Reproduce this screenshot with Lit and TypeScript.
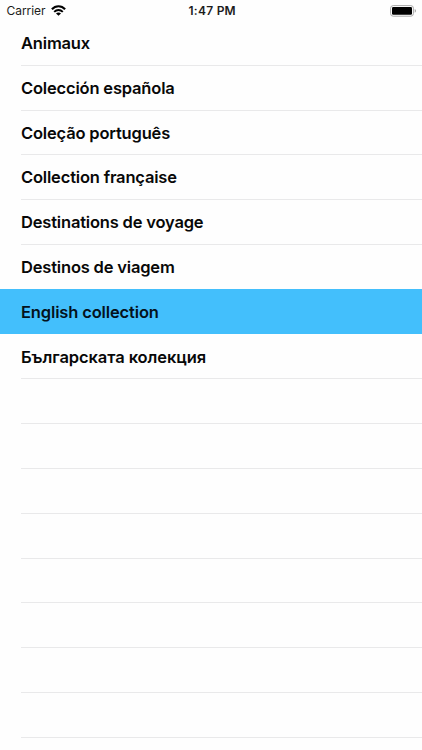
import { LitElement, html, css } from "lit";
import { customElement, state } from "lit/decorators.js";
import { classMap } from "lit/directives/class-map.js";

@customElement("status-bar")
class StatusBar extends LitElement {
  static styles = css`
    :host {
      display: grid;
      grid-template-columns: 1fr auto 1fr;
      align-items: center;
      flex: none;
      height: 21px;
      padding: 1px 5px 0 6.5px;
      box-sizing: border-box;
      font-size: 12px;
      line-height: 20px;
      color: #1c1c1c;
    }
    .carrier { display: flex; align-items: center; gap: 6px; letter-spacing: -0.05px; }
    .time { font-weight: 600; letter-spacing: 0.25px; padding-left: 1px; }
    .battery { display: flex; justify-content: flex-end; }
    svg { display: block; }
  `;
  render() {
    return html`
      <div class="carrier">
        <span>Carrier</span>
        <svg width="15" height="12" viewBox="0 0 15 12" fill="none">
          <path d="M0.9 4.3C4.5 0.2 10.5 0.2 14.1 4.3" stroke="#000" stroke-width="2.1" />
          <path d="M3.2 6.9C5.6 4.4 9.4 4.4 11.8 6.9" stroke="#000" stroke-width="1.9" />
          <path d="M5 8.4C6.4 7.1 8.6 7.1 10 8.4L7.5 10.8Z" fill="#000" />
        </svg>
      </div>
      <div class="time">1:47 PM</div>
      <div class="battery">
        <svg width="27" height="12" viewBox="0 0 27 12">
          <rect x=".6" y=".6" width="22.8" height="10.6" rx="2.6" fill="#fff" stroke="#a8a8a8" />
          <rect x="2" y="2" width="20" height="7.8" rx="1.2" fill="#000" />
          <path d="M24.7 4.1C26.5 4.6 26.5 7.2 24.7 7.7Z" fill="#a8a8a8" />
        </svg>
      </div>
    `;
  }
}

@customElement("app-root")
class AppRoot extends LitElement {
  static styles = css`
    :host {
      display: flex;
      flex-direction: column;
      height: 750px;
      overflow: hidden;
      background: #fefefe;
      font-family: Inter, "Noto Sans", sans-serif;
    }
    .list { display: flex; flex-direction: column; }
    .row {
      display: flex;
      flex: none;
      height: 44.8px;
      padding-left: 21px;
    }
    .cell {
      flex: 1;
      box-sizing: border-box;
      border-bottom: 1px solid #e9e9ea;
      font-size: 16.5px;
      font-weight: 600;
      letter-spacing: -0.18px;
      line-height: 44px;
      white-space: nowrap;
      color: #080808;
    }
    .cell:lang(bg) { letter-spacing: -0.08px; }
    .selected { background: #43bffc; margin: -0.4px 0 0.4px; }
    .selected .cell { border-color: transparent; color: #04121c; line-height: 46px; letter-spacing: -0.14px; }
    .flush .cell { border-color: transparent; }
  `;

  @state() private items = [
    { name: "Animaux", lang: "fr" },
    { name: "Colección española", lang: "es" },
    { name: "Coleção português", lang: "pt" },
    { name: "Collection française", lang: "fr" },
    { name: "Destinations de voyage", lang: "fr" },
    { name: "Destinos de viagem", lang: "pt" },
    { name: "English collection", lang: "en" },
    { name: "Българската колекция", lang: "bg" },
  ];
  @state() private selected = 6;

  render() {
    const rows = Array.from({ length: 16 }, (_, i) => this.items[i] ?? { name: "", lang: "en" });
    return html`
      <status-bar></status-bar>
      <div class="list">
        ${rows.map(
          (item, i) => html`
            <div class=${classMap({ row: true, selected: i === this.selected, flush: i === this.selected - 1 })}>
              <div class="cell" lang=${item.lang}>${item.name}</div>
            </div>
          `
        )}
      </div>
    `;
  }
}
